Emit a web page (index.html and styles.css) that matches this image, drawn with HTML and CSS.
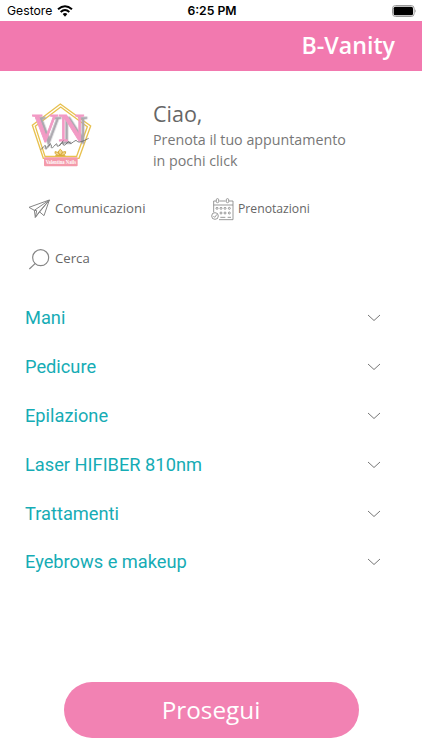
FILE: index.html
```html
<!DOCTYPE html>
<html lang="it">
<head>
<meta charset="utf-8">
<title>B-Vanity</title>
<link rel="stylesheet" href="styles.css">
</head>
<body>
<div class="status">
  <div class="carrier"><span>Gestore</span>
    <svg class="wifi" viewBox="0 0 48 36"><path d="M3 13Q24-5 45 13" fill="none" stroke="#000" stroke-width="6"/><path d="M11 21Q24 9 37 21" fill="none" stroke="#000" stroke-width="6"/><path d="M17 27Q24 21 31 27L24 35Z"/></svg>
  </div>
  <time class="clock">6:25 PM</time>
  <svg class="battery" viewBox="0 0 75 36"><rect x="1.5" y="1.5" width="65" height="33" rx="9" fill="#fff" stroke="#999" stroke-width="3"/><rect x="5" y="5" width="58" height="26" rx="5"/><path d="M70 13q4 5 0 10z" fill="#888"/></svg>
</div>
<header class="bar"><h1>B-Vanity</h1></header>
<main>
  <section class="hero">
    <svg class="logo" viewBox="0 0 240 240">
      <g fill="none" stroke="#e8c14f" stroke-width="4"><path d="M121 27L212 93L177 190H70L37 91Z"/><path d="M122 36L202 95L170 184H75L46 94Z"/></g>
      <text class="monogram" x="36" y="137" textLength="158" lengthAdjust="spacingAndGlyphs">VN</text>
      <path d="M63 164q16-20 13-8q-2 13 9 0q9-13 9-3q-2 12 9 0q8-12 8-3q0 9 10-2q8-10 8-1q2 9 12-3q6-8 8 0q3 5 12-4q8-8 12 0q6 5 33-10M78 158l14-13M118 153l12-16" fill="none" stroke="#555" stroke-width="2.2"/>
      <g fill="#f2d68d" stroke="#d9aa37" stroke-width="3"><path d="M121 181q-12-10 0-18q12 8 0 18q-17 1-16-11q11-1 16 11q17 1 16-11q-11-1-16 11"/><path d="M106 182h30"/></g>
      <rect x="72" y="187" width="101" height="27" rx="3" fill="#f49aaa"/>
      <text class="ribbon" x="77" y="207" textLength="91" lengthAdjust="spacingAndGlyphs">Valentina Nails</text>
    </svg>
    <div class="welcome"><h2>Ciao,</h2><p>Prenota il tuo appuntamento<br>in pochi click</p></div>
  </section>
  <nav class="links">
    <a><svg class="plane" viewBox="0 0 66 60"><path d="M3 25L64 3L48 50L34 38L22 55L19 34ZM19 34L64 3L34 38M19 34L26 35L22 55L64 3"/></svg><span>Comunicazioni</span></a>
    <a class="bookings"><svg class="calendar" viewBox="0 0 69 69"><path d="M8 43V9h7M25 9h19M54 9h12v56H24M8 21h58"/><rect x="16" y="2" width="7" height="12" rx="3"/><rect x="46" y="2" width="7" height="12" rx="3"/><circle cx="12" cy="54" r="10"/><path d="M7 54l4 4 7-9M28 58h15M50 58h10"/><g><circle cx="18" cy="31" r="3"/><circle cx="30" cy="31" r="3"/><circle cx="42" cy="31" r="3"/><circle cx="55" cy="31" r="3"/><circle cx="30" cy="45" r="3"/><circle cx="42" cy="45" r="3"/><circle cx="55" cy="45" r="3"/></g></svg><span>Prenotazioni</span></a>
    <a><svg class="search" viewBox="0 0 66 63"><circle cx="38" cy="26" r="24"/><path d="M22 43L4 60"/></svg><span>Cerca</span></a>
  </nav>
  <ul class="services">
    <li><span>Mani</span><svg viewBox="0 0 14 8"><path d="M1 1l6 5.5L13 1"/></svg></li>
    <li><span>Pedicure</span><svg viewBox="0 0 14 8"><path d="M1 1l6 5.5L13 1"/></svg></li>
    <li><span>Epilazione</span><svg viewBox="0 0 14 8"><path d="M1 1l6 5.5L13 1"/></svg></li>
    <li><span>Laser HIFIBER 810nm</span><svg viewBox="0 0 14 8"><path d="M1 1l6 5.5L13 1"/></svg></li>
    <li><span>Trattamenti</span><svg viewBox="0 0 14 8"><path d="M1 1l6 5.5L13 1"/></svg></li>
    <li><span>Eyebrows e makeup</span><svg viewBox="0 0 14 8"><path d="M1 1l6 5.5L13 1"/></svg></li>
  </ul>
</main>
<button class="continue">Prosegui</button>
</body>
</html>
```

FILE: styles.css
```css
* { box-sizing: border-box; }
body { margin: 0; height: 750px; background: #fff; color: #666; font-family: "Open Sans", sans-serif; display: flex; flex-direction: column; overflow: hidden; }
h1, h2, p, ul { margin: 0; padding: 0; }
.status { height: 21px; flex: none; padding: 0 5px 0 7px; display: grid; grid-template-columns: 1fr auto 1fr; align-items: center; font: 12.2px/21px Inter, sans-serif; color: #000; }
.carrier { display: flex; align-items: center; gap: 4.5px; }
.wifi { width: 16px; height: 12px; }
.clock { font-weight: 600; }
.battery { width: 25px; height: 12px; justify-self: end; }
.bar { height: 50px; flex: none; background: #f279af; padding: 0 27px 2px 0; display: flex; align-items: center; justify-content: flex-end; }
h1 { color: #fff; font-size: 23.2px; line-height: 30px; font-weight: 600; }
main { flex: 1; }
.hero { display: flex; padding: 24px 20px 0; height: 115px; }
.logo { width: 80px; height: 80px; flex: none; }
.monogram { font: 120px "Liberation Serif", serif; fill: #f29bc5; stroke: #f29bc5; stroke-width: 2.5; filter: drop-shadow(10px 7px 0 #aaa7ae); }
.ribbon { font: bold 20px "Liberation Serif", serif; fill: #fff; }
.welcome { margin-left: 53px; padding-top: 3px; }
h2 { font-size: 21.5px; line-height: 31px; font-weight: 400; }
.welcome p { font-size: 14.25px; line-height: 21px; color: #777; }
.links { display: grid; grid-template-columns: 183px 1fr; grid-auto-rows: 50px; padding-left: 28px; height: 107px; }
.links a { display: flex; align-items: center; height: 46px; font-size: 13.2px; }
.links span { padding-bottom: 2px; }
.links svg { fill: none; stroke: #858585; flex: none; }
.plane { width: 22px; height: 20px; stroke-width: 3; margin-right: 5px; }
.calendar { width: 23px; height: 23px; stroke-width: 2.5; margin-right: 4px; }
.search { width: 22px; height: 21px; stroke-width: 3.5; margin-right: 5px; }
.links .bookings { font-size: 12.2px; }
.services { list-style: none; padding: 1px 41px 0 25px; }
.services li { height: 48.8px; display: flex; align-items: center; justify-content: space-between; font: 18.25px/24px Roboto, sans-serif; color: #16acb5; }
.services svg { width: 14px; height: 8px; fill: none; stroke: #777; }
.continue { flex: none; width: 295px; height: 56px; margin: 0 0 12.5px 63.5px; padding: 0; border: 0; border-radius: 28px; background: #f282b3; color: #fff; font: 24.3px/56px "Open Sans", sans-serif; }
```
